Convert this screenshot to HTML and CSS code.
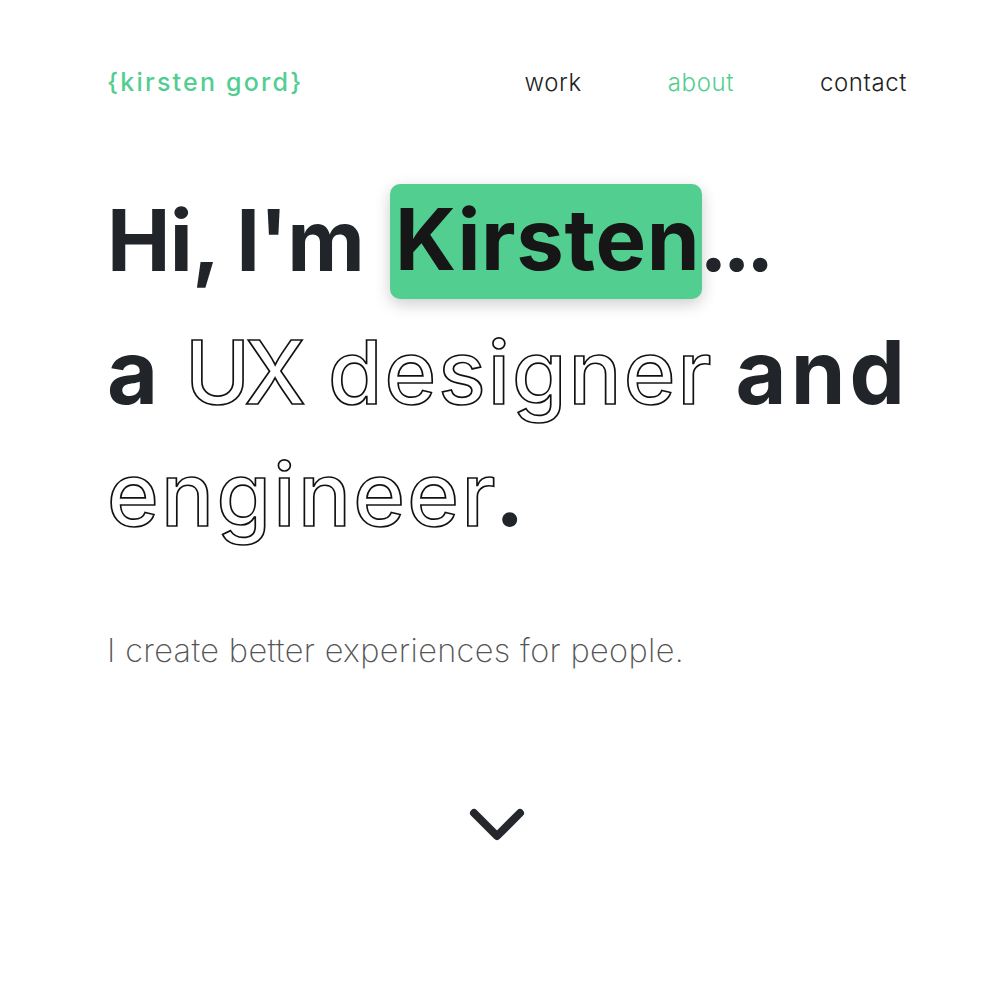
FILE: index.html
```html
<!DOCTYPE html>
<html lang="en">
<head>
<meta charset="utf-8">
<title>kirsten gord</title>
<link rel="stylesheet" href="styles.css">
</head>
<body>
<div class="page">
  <header class="header">
    <a class="logo" href="#">{kirsten gord}</a>
    <nav class="nav">
      <a href="#" class="nav-link">work</a>
      <a href="#" class="nav-link active">about</a>
      <a href="#" class="nav-link">contact</a>
    </nav>
  </header>
  <main class="hero">
    <h1 class="headline">
      <span class="line line-1"><span class="plain">Hi, I'm</span><span class="name">Kirsten</span><span class="dots">...</span></span>
      <span class="line line-2"><span class="plain">a</span><span class="outline ux">UX</span><span class="outline designer">designer</span><span class="plain and">and</span></span>
      <span class="line line-3"><span class="outline">engineer</span><span class="plain dot">.</span></span>
    </h1>
    <p class="tagline">I create better experiences for people.</p>
    <div class="scroll">
      <svg width="56" height="38" viewBox="0 0 56 38" aria-hidden="true">
        <path d="M5 7 L28 30 L51 7" fill="none" stroke="#24272b" stroke-width="8" stroke-linecap="round" stroke-linejoin="round"/>
      </svg>
    </div>
  </main>
</div>
</body>
</html>
```
FILE: styles.css
```css
* { box-sizing: border-box; }
html, body { margin: 0; padding: 0; background: #fff; }
body { font-family: Inter, "Noto Sans", sans-serif; color: #212529; }
a { text-decoration: none; }

.page { padding: 0 93px 0 107px; }

.header {
  display: flex;
  justify-content: space-between;
  align-items: center;
  height: 50px;
  margin-top: 57px;
}
.logo {
  font-family: Inter, sans-serif;
  font-size: 25px;
  font-weight: 500;
  letter-spacing: 2.2px;
  color: #52ce91;
}
.nav { display: flex; gap: 86px; }
.nav-link {
  font-family: Inter, sans-serif;
  font-size: 24px;
  font-weight: 300;
  letter-spacing: 0.6px;
  color: #222;
}
.nav-link.active { color: #52ce91; }

.hero { padding-top: 71px; }
.headline {
  margin: 0;
  font-weight: 700;
  line-height: 1;
  display: flex;
  flex-direction: column;
}
.line { display: flex; align-items: center; white-space: pre; }
.line-1 {
  height: 125px;
  font-size: 85px;
  letter-spacing: -0.8px;
}
.line-1 .name {
  background: #52ce91;
  color: #161616;
  border-radius: 10px;
  padding: 13px 2px 17px 5px;
  letter-spacing: 0.6px;
  margin-left: 26px;
  margin-top: 1px;
  box-shadow: 0 5px 16px rgba(0,0,0,0.2);
}
.line-1 .dots { margin-left: -3px; letter-spacing: -5px; }

.line-2 {
  height: 125px;
  margin-top: 6px;
  font-size: 88px;
  letter-spacing: 1px;
}
.line-3 {
  height: 120px;
  font-size: 88px;
  letter-spacing: 1px;
}
.outline {
  color: #fff;
  -webkit-text-stroke: 1.7px #111;
  font-weight: 500;
  letter-spacing: 2px;
}
.line-2 .ux { margin-left: 26px; letter-spacing: -6px; }
.line-2 .designer { margin-left: 28px; letter-spacing: 2.1px; }
.line-2 .and { margin-left: 22px; letter-spacing: 4px; }
.line-3 .outline { letter-spacing: 2.4px; }
.line-3 .dot { margin-left: -3px; }

.tagline {
  margin: 77px 0 0;
  font-size: 32.5px;
  font-weight: 200;
  letter-spacing: 0.35px;
  color: #555;
}
.scroll {
  display: flex;
  justify-content: center;
  padding-right: 20px;
  margin-top: 136px;
}
```
